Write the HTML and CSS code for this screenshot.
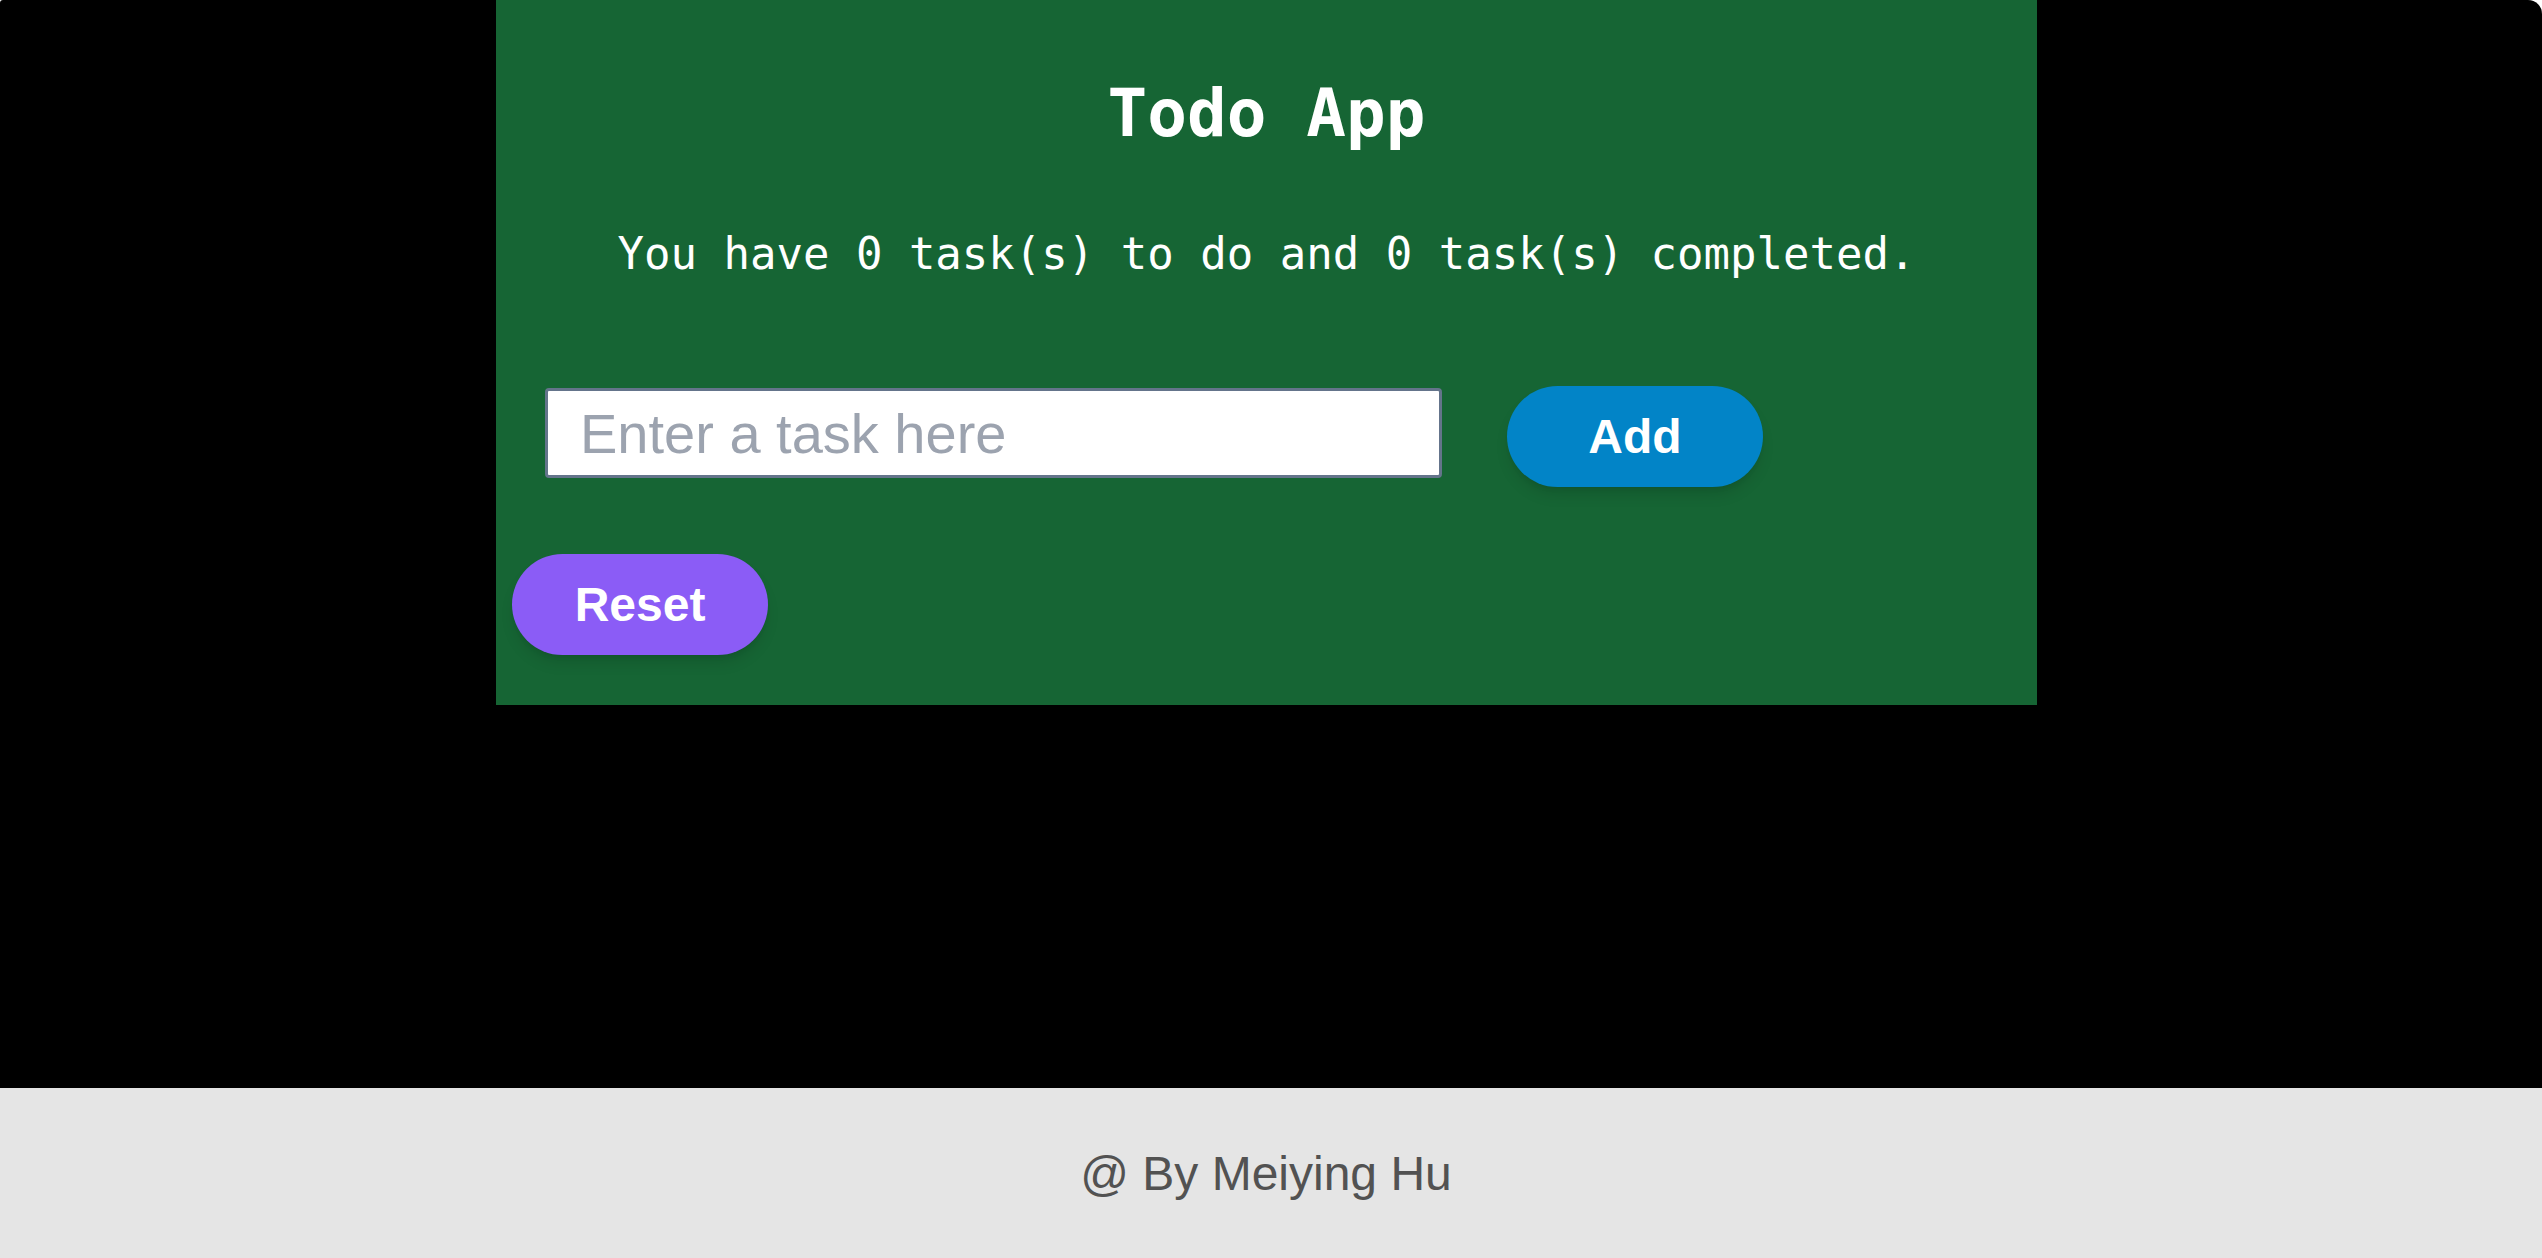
FILE: index.html
```html
<!DOCTYPE html>
<html lang="en">
<head>
<meta charset="utf-8">
<title>Todo App</title>
<link rel="stylesheet" href="styles.css">
</head>
<body>
<main class="main">
  <section class="panel">
    <h1 class="title">Todo App</h1>
    <p class="summary">You have 0 task(s) to do and 0 task(s) completed.</p>
    <form class="add-row">
      <input class="task-input" type="text" placeholder="Enter a task here">
      <button class="btn btn-add" type="button">Add</button>
    </form>
    <button class="btn btn-reset" type="button">Reset</button>
  </section>
</main>
<footer class="footer">@ By Meiying Hu</footer>
</body>
</html>
```

FILE: styles.css
```css
html {
  background: #ffffff;
  height: 100%;
}

body {
  margin: 0;
  min-height: 100vh;
  display: flex;
  flex-direction: column;
  background: #000000;
  border-top-left-radius: 3px;
  border-top-right-radius: 14px;
  font-family: "Liberation Sans", Arial, sans-serif;
}

.main {
  flex: 1;
}

.panel {
  width: 1541px;
  margin-left: 496px;
  box-sizing: border-box;
  background: #166534;
  padding: 81px 0 50px 0;
  display: flex;
  flex-direction: column;
}

.title {
  margin: 0;
  font-family: "DejaVu Sans Mono", "Liberation Mono", monospace;
  font-weight: bold;
  font-size: 66px;
  line-height: 66px;
  color: #ffffff;
  text-align: center;
}

.summary {
  margin: 85px 0 0 0;
  font-family: "DejaVu Sans Mono", "Liberation Mono", monospace;
  font-size: 44px;
  line-height: 44px;
  color: #ffffff;
  text-align: center;
}

.add-row {
  margin: 110px 0 0 49px;
  display: flex;
  align-items: flex-start;
  gap: 65px;
}

.task-input {
  margin-top: 2px;
  width: 897px;
  height: 90px;
  box-sizing: border-box;
  border: 3px solid #64748b;
  border-radius: 4px;
  padding: 0 32px;
  background: #ffffff;
  font-family: "Liberation Sans", Arial, sans-serif;
  font-size: 56px;
  color: #111827;
  outline: none;
}

.task-input::placeholder {
  color: #9ca3af;
}

.btn {
  width: 256px;
  height: 101px;
  box-sizing: border-box;
  border: none;
  border-radius: 9999px;
  padding: 0;
  font-family: "Liberation Sans", Arial, sans-serif;
  font-weight: bold;
  font-size: 48px;
  line-height: 48px;
  color: #ffffff;
  box-shadow: 0 10px 15px -3px rgba(0, 0, 0, 0.12), 0 4px 6px -4px rgba(0, 0, 0, 0.12);
  cursor: pointer;
}

.btn-add {
  background: #0284c7;
}

.btn-reset {
  margin: 67px 0 0 16px;
  background: #8b5cf6;
  align-self: flex-start;
}

.footer {
  height: 170px;
  box-sizing: border-box;
  padding-right: 10px;
  background: #e5e5e5;
  color: #525252;
  font-size: 48px;
  display: flex;
  align-items: center;
  justify-content: center;
}
```
